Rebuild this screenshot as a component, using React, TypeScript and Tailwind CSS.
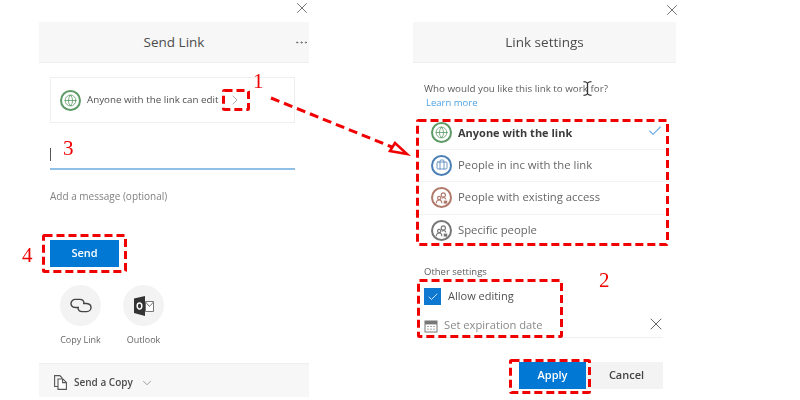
import React from 'react';
import { X, ChevronRight, ChevronDown, MoreHorizontal, Check, Globe, Briefcase } from 'lucide-react';

// ─ Small bits ─────────────────────────────────────────────────────────────────
const Mark: React.FC<{ className: string; w: number; h: number }> = ({ className, w, h }) => (
  <svg className={`absolute ${className}`} width={w} height={h} fill="none">
    <rect x="1.5" y="1.5" width={w - 3} height={h - 3} rx="1" stroke="#f00000" strokeWidth="3" strokeDasharray="8 4" />
  </svg>
);

const Num: React.FC<{ n: string; className: string }> = ({ n, className }) => (
  <span className={`absolute text-[21px] leading-none text-[#f00000] font-['Liberation_Serif',serif] ${className}`}>{n}</span>
);

const Ring: React.FC<{ color: string; children: React.ReactNode }> = ({ color, children }) => (
  <span className="w-[21px] h-[21px] shrink-0 rounded-full border-2 flex items-center justify-center" style={{ borderColor: color, color }}>
    {children}
  </span>
);

const People: React.FC<{ badge: string }> = ({ badge }) => (
  <svg viewBox="0 0 16 16" className="w-[14px] h-[14px]" fill="none" stroke="currentColor" strokeWidth="1.3">
    <circle cx="9.5" cy="4.5" r="2.4" />
    <circle cx="4.8" cy="8" r="1.9" />
    <path d="M1.5 14c0-2.4 1.3-3.7 3.3-3.7s3 1.3 3 3.7" />
    <path d="M8 8.3c.5-.6 1-.9 1.7-.9 1.4 0 2.4.8 2.8 2.2" />
    <rect x="10" y="11" width="4" height="3.4" fill={badge} stroke="none" />
  </svg>
);

const OptionRow: React.FC<{ icon: React.ReactNode; label: string; bold?: boolean; last?: boolean; check?: boolean }> = ({ icon, label, bold, last, check }) => (
  <div className={`h-[32.5px] flex items-center gap-[6px] pl-[18px] pr-[6px] ${last ? '' : 'border-b border-[#f3f3f3]'}`}>
    {icon}
    <span className={`flex-1 ${bold ? 'text-[11px] font-bold text-[#3c3c3c]' : 'text-[11.3px] text-[#666]'}`}>{label}</span>
    {check && <Check className="w-[16px] h-[16px] text-[#69a9e4] mr-[2px] -mt-[3px]" strokeWidth={1.6} />}
  </div>
);

const ShareIcon: React.FC<{ label: string; children: React.ReactNode }> = ({ label, children }) => (
  <div className="w-[63px] flex flex-col items-center">
    <div className="w-[41px] h-[41px] rounded-full bg-[#f3f3f3] flex items-center justify-center">{children}</div>
    <span className="mt-[6px] text-[9px] leading-[16px] text-[#666]">{label}</span>
  </div>
);

const LinkIcon = () => (
  <svg viewBox="0 0 22 15" className="w-[22px] h-[15px]" fill="none" stroke="#444" strokeWidth="1.4">
    <path d="M9 9.5H5.2C2.8 9.2 1 7.6 1 5.5S2.8 1.4 5.2 1.4h4.6c2.3 0 4 1.6 4.2 3.6" />
    <path d="M13 5.5h3.8c2.4.3 4.2 1.9 4.2 4s-1.8 4.1-4.2 4.1h-4.6c-2.3 0-4-1.6-4.2-3.6" />
  </svg>
);

const OutlookIcon = () => (
  <svg viewBox="0 0 20 20" className="w-[20px] h-[20px]">
    <path d="M0 2.5 11 0v20L0 17z" fill="#333" />
    <ellipse cx="5.5" cy="10" rx="2.3" ry="3" fill="none" stroke="#fff" strokeWidth="1.5" />
    <path d="M11.5 5.5h8v10h-8z" fill="#fff" stroke="#777" />
    <path d="m11.5 6 4 4.5 4-4.5" fill="none" stroke="#777" />
  </svg>
);

const CopyIcon = () => (
  <svg viewBox="0 0 13 15" className="w-[13px] h-[15px]" fill="none" stroke="#555" strokeWidth="1.1">
    <path d="M4 11.5H.6V.6h5.2L8 2.8v1" />
    <path d="M4 4h5l3.4 3.4v7H4z" fill="#fff" />
    <path d="M8.6 4v3.6h3.8" />
  </svg>
);

const CalendarIcon = () => (
  <svg viewBox="0 0 14 14" className="w-[14px] h-[14px]">
    <rect x="1" y="2" width="12" height="11" fill="#fff" stroke="#777" />
    <rect x="1" y="2" width="12" height="3.4" fill="#777" />
    <path d="M3 7.5h2M6 7.5h2M9 7.5h2M3 10.2h2M6 10.2h2M9 10.2h2" stroke="#aaa" />
  </svg>
);

const IBeam = () => (
  <svg viewBox="0 0 9 15" className="absolute left-[170px] top-[81px] w-[9px] h-[15px]" fill="none" stroke="#333" strokeWidth="1.3">
    <path d="M.5.7c2 0 3 .4 4 1.4 1-1 2-1.4 4-1.4M4.5 2v11M.5 14.3c2 0 3-.4 4-1.4 1 1 2 1.4 4 1.4" />
  </svg>
);

// ─ Send Link panel ────────────────────────────────────────────────────────────
const SendLink: React.FC = () => (
  <div className="relative w-[270px] h-[400px] shrink-0">
    <div className="h-[22px] flex items-start justify-end -mr-[2px] -mt-[1px]">
      <X className="w-[18px] h-[18px] text-[#666]" strokeWidth={1.2} />
    </div>
    <div className="h-[41px] mt-[1px] bg-[#f7f7f7] border-b border-[#efefef] relative flex items-center justify-center">
      <span className="text-[13.5px] text-[#4c4c4c]">Send Link</span>
      <MoreHorizontal className="absolute right-0 top-[13px] w-[15px] h-[15px] text-[#666]" strokeWidth={1.4} />
    </div>

    <div className="pl-[11px] pr-[14px]">
      <div className="mt-[14px] h-[46px] border border-[#efefef] flex items-center pl-[9px] gap-[6px]">
        <Ring color="#5c9a66"><Globe className="w-[13px] h-[13px]" strokeWidth={1.5} /></Ring>
        <span className="text-[9.8px] text-[#505050]">Anyone with the link can edit</span>
        <ChevronRight className="ml-[2px] w-[16px] h-[16px] text-[#999]" strokeWidth={1.2} />
      </div>
      <div className="mt-[23px] h-[24px] border-b-2 border-[#8fc0e8] flex items-start">
        <span className="w-[1px] h-[13px] bg-[#555] mt-[2px]" />
      </div>
      <p className="mt-[19px] text-[10px] leading-[15px] text-[#808080]">Add a message (optional)</p>
      <button className="mt-[36px] block w-[69px] h-[27px] bg-[#0078d4] text-white text-[11px] font-semibold">Send</button>
      <div className="mt-[18px] flex -ml-[1px]">
        <ShareIcon label="Copy Link"><LinkIcon /></ShareIcon>
        <ShareIcon label="Outlook"><OutlookIcon /></ShareIcon>
      </div>
    </div>

    <div className="absolute left-0 right-0 top-[363px] h-[34px] bg-[#f7f7f7] border-t border-[#efefef] flex items-center pl-[15px] pt-[4px] gap-[7px]">
      <CopyIcon />
      <span className="text-[10px] font-semibold text-[#4c4c4c]">Send a Copy</span>
      <ChevronDown className="w-[14px] h-[14px] text-[#777]" strokeWidth={1.2} />
    </div>
  </div>
);

// ─ Link settings panel ────────────────────────────────────────────────────────
const LinkSettings: React.FC = () => (
  <div className="relative w-[263px] h-[400px] shrink-0 ml-[104px]">
    <div className="h-[22px] flex items-start justify-end pt-[1px] -mr-[5px]">
      <X className="w-[18px] h-[18px] text-[#666]" strokeWidth={1.2} />
    </div>
    <div className="h-[41px] bg-[#f7f7f7] border-b border-[#efefef] flex items-center justify-center">
      <span className="text-[13.5px] text-[#4c4c4c]">Link settings</span>
    </div>
    <div className="pl-[11px] pt-[18px]">
      <p className="text-[9.8px] leading-[15px] text-[#5c5c5c]">Who would you like this link to work for?</p>
      <p className="text-[9.5px] leading-[13px] text-[#4fa3e3] pl-[2px]">Learn more</p>
    </div>
    <div className="mt-[8px] pr-[5px]">
      <OptionRow bold check label="Anyone with the link"
        icon={<Ring color="#5c9a66"><Globe className="w-[13px] h-[13px]" strokeWidth={1.5} /></Ring>} />
      <OptionRow label="People in inc with the link"
        icon={<Ring color="#4a7fb5"><Briefcase className="w-[12px] h-[12px]" strokeWidth={1.6} /></Ring>} />
      <OptionRow label="People with existing access"
        icon={<Ring color="#b0796a"><People badge="#b0796a" /></Ring>} />
      <OptionRow last label="Specific people"
        icon={<Ring color="#777"><People badge="#777" /></Ring>} />
    </div>
    <div className="pl-[11px] mt-[18px]">
      <p className="text-[9.5px] leading-[14px] text-[#5c5c5c]">Other settings</p>
      <div className="mt-[9px] flex items-center gap-[7px]">
        <span className="w-[17px] h-[17px] bg-[#0f78d0] flex items-center justify-center">
          <Check className="w-[12px] h-[12px] text-white" strokeWidth={1.6} />
        </span>
        <span className="text-[11px] text-[#505050]">Allow editing</span>
      </div>
      <div className="mt-[10px] h-[23px] flex items-center gap-[6px] border-b border-[#efefef] mr-[13px] pb-[1px] relative">
        <CalendarIcon />
        <span className="text-[11.2px] text-[#8a8a8a]">Set expiration date</span>
        <X className="absolute right-[-3px] top-[-1px] w-[20px] h-[20px] text-[#666]" strokeWidth={1.2} />
      </div>
      <div className="mt-[24px] flex justify-end mr-[13px]">
        <button className="w-[67px] h-[27px] bg-[#0078d4] text-white text-[11px] font-semibold">Apply</button>
        <button className="w-[77px] h-[27px] pl-[4px] bg-[#f3f3f3] text-[#444] text-[11px] font-semibold">Cancel</button>
      </div>
    </div>
    <IBeam />
  </div>
);

export default function App() {
  return (
    <div className="relative w-[800px] h-[400px] overflow-hidden bg-white font-['Open_Sans',sans-serif]">
      <div className="flex pl-[39px] blur-[0.4px]">
        <SendLink />
        <LinkSettings />
      </div>

      {/* Red annotations */}
      <Mark className="left-[222px] top-[89px]" w={28} h={22} />
      <Mark className="left-[42px] top-[234px]" w={85} h={39} />
      <Mark className="left-[416px] top-[119px]" w={253} h={127} />
      <Mark className="left-[417px] top-[279px]" w={146} h={59} />
      <Mark className="left-[509px] top-[359px]" w={82} h={35} />
      <Num n="1" className="left-[253px] top-[71px]" />
      <Num n="3" className="left-[63px] top-[138px]" />
      <Num n="4" className="left-[22px] top-[245px]" />
      <Num n="2" className="left-[599px] top-[270px]" />
      <svg className="absolute left-[265px] top-[90px]" width="150" height="70" viewBox="0 0 150 70" fill="none">
        <path d="M6 8 L127 57" stroke="#f00000" strokeWidth="3" strokeDasharray="9 5" />
        <path d="M125 61 L130 53 L142 64 Z" stroke="#f00000" strokeWidth="2.5" fill="white" />
      </svg>
    </div>
  );
}
